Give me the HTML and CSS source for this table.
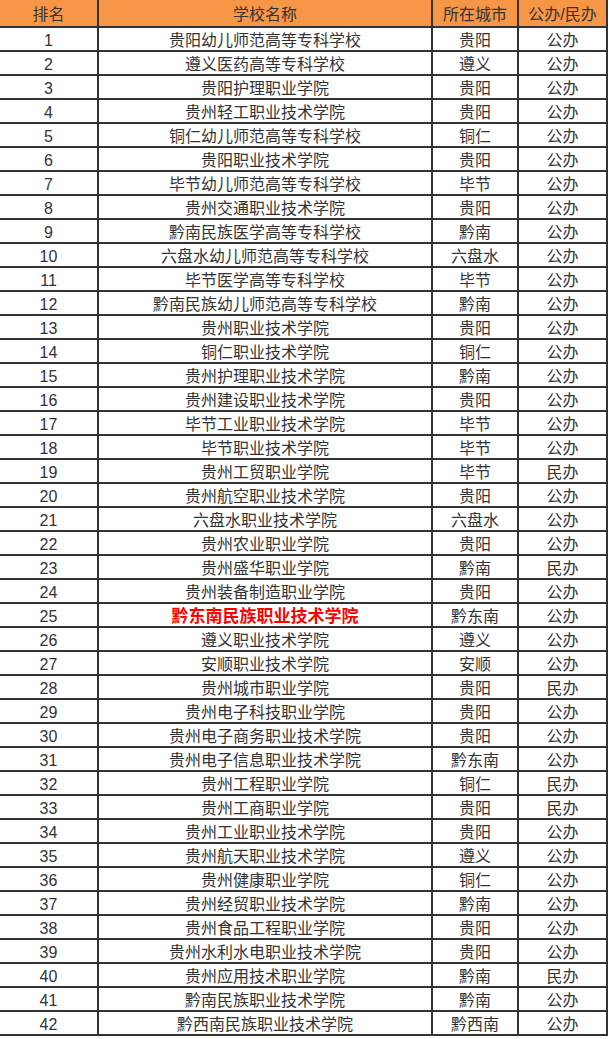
FILE: index.html
```
<!DOCTYPE html>
<html lang="zh-CN">
<head>
<meta charset="utf-8">
<title>排名</title>
<link rel="stylesheet" href="styles.css">
</head>
<body>
<table class="rank">
<thead>
<tr><th class="c1">排名</th><th class="c2">学校名称</th><th class="c3">所在城市</th><th class="c4">公办/民办</th></tr>
</thead>
<tbody>
<tr><td>1</td><td>贵阳幼儿师范高等专科学校</td><td>贵阳</td><td>公办</td></tr>
<tr><td>2</td><td>遵义医药高等专科学校</td><td>遵义</td><td>公办</td></tr>
<tr><td>3</td><td>贵阳护理职业学院</td><td>贵阳</td><td>公办</td></tr>
<tr><td>4</td><td>贵州轻工职业技术学院</td><td>贵阳</td><td>公办</td></tr>
<tr><td>5</td><td>铜仁幼儿师范高等专科学校</td><td>铜仁</td><td>公办</td></tr>
<tr><td>6</td><td>贵阳职业技术学院</td><td>贵阳</td><td>公办</td></tr>
<tr><td>7</td><td>毕节幼儿师范高等专科学校</td><td>毕节</td><td>公办</td></tr>
<tr><td>8</td><td>贵州交通职业技术学院</td><td>贵阳</td><td>公办</td></tr>
<tr><td>9</td><td>黔南民族医学高等专科学校</td><td>黔南</td><td>公办</td></tr>
<tr><td>10</td><td>六盘水幼儿师范高等专科学校</td><td>六盘水</td><td>公办</td></tr>
<tr><td>11</td><td>毕节医学高等专科学校</td><td>毕节</td><td>公办</td></tr>
<tr><td>12</td><td>黔南民族幼儿师范高等专科学校</td><td>黔南</td><td>公办</td></tr>
<tr><td>13</td><td>贵州职业技术学院</td><td>贵阳</td><td>公办</td></tr>
<tr><td>14</td><td>铜仁职业技术学院</td><td>铜仁</td><td>公办</td></tr>
<tr><td>15</td><td>贵州护理职业技术学院</td><td>黔南</td><td>公办</td></tr>
<tr><td>16</td><td>贵州建设职业技术学院</td><td>贵阳</td><td>公办</td></tr>
<tr><td>17</td><td>毕节工业职业技术学院</td><td>毕节</td><td>公办</td></tr>
<tr><td>18</td><td>毕节职业技术学院</td><td>毕节</td><td>公办</td></tr>
<tr><td>19</td><td>贵州工贸职业学院</td><td>毕节</td><td>民办</td></tr>
<tr><td>20</td><td>贵州航空职业技术学院</td><td>贵阳</td><td>公办</td></tr>
<tr><td>21</td><td>六盘水职业技术学院</td><td>六盘水</td><td>公办</td></tr>
<tr><td>22</td><td>贵州农业职业学院</td><td>贵阳</td><td>公办</td></tr>
<tr><td>23</td><td>贵州盛华职业学院</td><td>黔南</td><td>民办</td></tr>
<tr><td>24</td><td>贵州装备制造职业学院</td><td>贵阳</td><td>公办</td></tr>
<tr><td>25</td><td class="hl">黔东南民族职业技术学院</td><td>黔东南</td><td>公办</td></tr>
<tr><td>26</td><td>遵义职业技术学院</td><td>遵义</td><td>公办</td></tr>
<tr><td>27</td><td>安顺职业技术学院</td><td>安顺</td><td>公办</td></tr>
<tr><td>28</td><td>贵州城市职业学院</td><td>贵阳</td><td>民办</td></tr>
<tr><td>29</td><td>贵州电子科技职业学院</td><td>贵阳</td><td>公办</td></tr>
<tr><td>30</td><td>贵州电子商务职业技术学院</td><td>贵阳</td><td>公办</td></tr>
<tr><td>31</td><td>贵州电子信息职业技术学院</td><td>黔东南</td><td>公办</td></tr>
<tr><td>32</td><td>贵州工程职业学院</td><td>铜仁</td><td>民办</td></tr>
<tr><td>33</td><td>贵州工商职业学院</td><td>贵阳</td><td>民办</td></tr>
<tr><td>34</td><td>贵州工业职业技术学院</td><td>贵阳</td><td>公办</td></tr>
<tr><td>35</td><td>贵州航天职业技术学院</td><td>遵义</td><td>公办</td></tr>
<tr><td>36</td><td>贵州健康职业学院</td><td>铜仁</td><td>公办</td></tr>
<tr><td>37</td><td>贵州经贸职业技术学院</td><td>黔南</td><td>公办</td></tr>
<tr><td>38</td><td>贵州食品工程职业学院</td><td>贵阳</td><td>公办</td></tr>
<tr><td>39</td><td>贵州水利水电职业技术学院</td><td>贵阳</td><td>公办</td></tr>
<tr><td>40</td><td>贵州应用技术职业学院</td><td>黔南</td><td>民办</td></tr>
<tr><td>41</td><td>黔南民族职业技术学院</td><td>黔南</td><td>公办</td></tr>
<tr><td>42</td><td>黔西南民族职业技术学院</td><td>黔西南</td><td>公办</td></tr>
</tbody>
</table>
</body>
</html>
```
FILE: styles.css
```
html, body {
  margin: 0;
  padding: 0;
  background: #ffffff;
}

.rank {
  border-collapse: separate;
  border-spacing: 0;
  table-layout: fixed;
  width: 608px;
  font-family: "Liberation Sans", "Noto Sans CJK SC", sans-serif;
  font-size: 16px;
  color: #333333;
}

.rank th,
.rank td {
  box-sizing: border-box;
  text-align: center;
  vertical-align: top;
  border-right: 2px solid #333333;
  border-bottom: 2px solid #333333;
  white-space: nowrap;
  overflow: hidden;
}

.rank th {
  background: #f79646;
  font-weight: normal;
  height: 28px;
  padding: 4px 0 0 0;
  line-height: 22px;
}

.rank td {
  height: 24px;
  padding: 4px 0 0 0;
  line-height: 18px;
}

.rank .c1 { width: 99px; }
.rank .c2 { width: 334px; }
.rank .c3 { width: 86px; }
.rank .c4 { width: 89px; }

.rank .hl {
  color: #ff0000;
  font-weight: bold;
  font-size: 17px;
}
```
